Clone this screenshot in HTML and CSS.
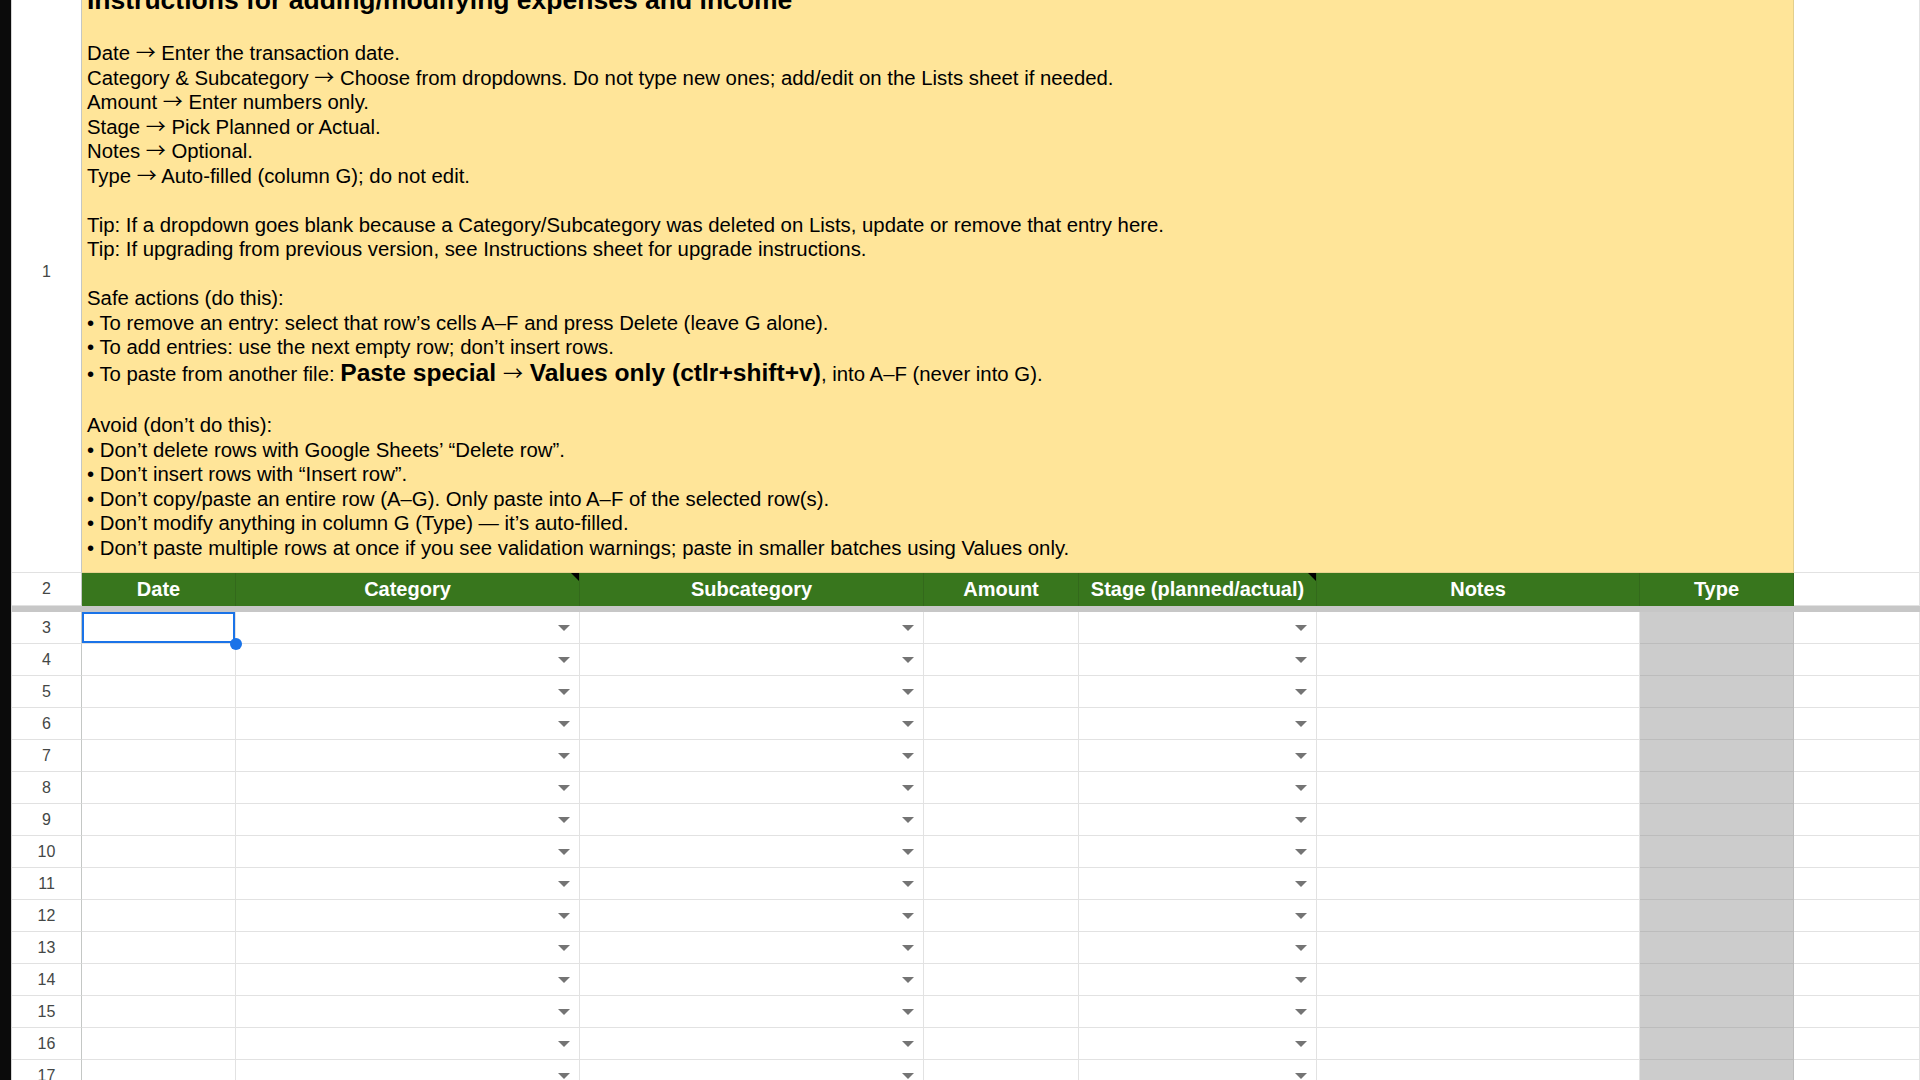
FILE: index.html
```html
<!DOCTYPE html>
<html lang="en">
<head>
  <meta charset="UTF-8">
  <title>Transactions</title>
  <link rel="stylesheet" href="styles.css">
</head>
<body>
  <div class="edge"></div>
  <div class="sheet">
    <div class="row row-notes">
      <div class="rh">1</div>
      <div class="cell instructions">
        <p class="title">Instructions for adding/modifying expenses and income</p>
        <p>Date <span class="to">→</span> Enter the transaction date.<br>
          Category &amp; Subcategory <span class="to">→</span> Choose from dropdowns. Do not type new ones; add/edit on the Lists sheet if needed.<br>
          Amount <span class="to">→</span> Enter numbers only.<br>
          Stage <span class="to">→</span> Pick Planned or Actual.<br>
          Notes <span class="to">→</span> Optional.<br>
          Type <span class="to">→</span> Auto-filled (column G); do not edit.</p>
        <p>Tip: If a dropdown goes blank because a Category/Subcategory was deleted on Lists, update or remove that entry here.<br>
          Tip: If upgrading from previous version, see Instructions sheet for upgrade instructions.</p>
        <p class="tight">Safe actions (do this):<br>
          • To remove an entry: select that row’s cells A–F and press Delete (leave G alone).<br>
          • To add entries: use the next empty row; don’t insert rows.</p>
        <p class="paste">• To paste from another file: <strong>Paste special <span class="to">→</span> Values only (ctlr+shift+v)</strong>, into A–F (never into G).</p>
        <p>Avoid (don’t do this):<br>
          • Don’t delete rows with Google Sheets’ “Delete row”.<br>
          • Don’t insert rows with “Insert row”.<br>
          • Don’t copy/paste an entire row (A–G). Only paste into A–F of the selected row(s).<br>
          • Don’t modify anything in column G (Type) — it’s auto-filled.<br>
          • Don’t paste multiple rows at once if you see validation warnings; paste in smaller batches using Values only.</p>
      </div>
      <div class="cell blank"></div>
    </div>

    <div class="row row-head">
      <div class="rh">2</div>
      <div class="hcell">Date</div>
      <div class="hcell note">Category</div>
      <div class="hcell">Subcategory</div>
      <div class="hcell">Amount</div>
      <div class="hcell note">Stage (planned/actual)</div>
      <div class="hcell">Notes</div>
      <div class="hcell">Type</div>
      <div class="cell blank"></div>
    </div>

    <div class="freeze"></div>

    <div id="rows"></div>
  </div>

  <script src="sheet.js"></script>
</body>
</html>
```

FILE: sheet.js
```js
// build the empty entry rows 3..17
var rows = document.getElementById('rows');

for (var n = 3; n <= 17; n++) {
  var row = document.createElement('div');
  row.className = 'row row-data';

  var cells = [
    '<div class="rh">' + n + '</div>',
    '<div class="cell' + (n === 3 ? ' selected' : '') + '"></div>',
    '<div class="cell dd"><span class="arrow"></span></div>',
    '<div class="cell dd"><span class="arrow"></span></div>',
    '<div class="cell"></div>',
    '<div class="cell dd"><span class="arrow"></span></div>',
    '<div class="cell"></div>',
    '<div class="cell type"></div>',
    '<div class="cell"></div>'
  ];

  row.innerHTML = cells.join('');
  rows.appendChild(row);
}
```

FILE: styles.css
```css
body {
  margin: 0;
  padding: 0;
  display: flex;
  height: 100vh;
  overflow: hidden;
  background: #fff;
  font-family: "Liberation Sans", Arial, sans-serif;
  color: #000;
}

.edge {
  width: 11px;
  flex-shrink: 0;
  background: #0b0b0b;
  border-right: 1px solid #d6d6d6;
}

.sheet {
  flex: 1;
  margin-top: -29px;
}

.row {
  display: grid;
  grid-template-columns: 70px 154px 344px 344px 155px 238px 323px 154px 1fr;
}

.rh {
  display: flex;
  align-items: center;
  justify-content: center;
  font-size: 16px;
  color: #444746;
  border-right: 1px solid #c4c7c5;
  border-bottom: 1px solid #e1e1e1;
  box-sizing: border-box;
}

.cell {
  position: relative;
  box-sizing: border-box;
  border-right: 1px solid #e2e2e2;
  border-bottom: 1px solid #e2e2e2;
}

/* row 1: the instructions block */
.row-notes {
  height: 602px;
}

.instructions {
  grid-column: span 7;
  background: #ffe599;
  border-right: 1px solid #e3cf8c;
  border-bottom: 1px solid #e8d38f;
  padding: 0 5px 12px;
  display: flex;
  flex-direction: column;
  justify-content: flex-end;
  overflow: hidden;
  font-size: 20.35px;
  line-height: 24.5px;
}

.instructions p {
  margin: 0 0 24.5px 0;
}

.instructions p.tight,
.instructions p:last-child {
  margin-bottom: 0;
}

.instructions .title {
  font-size: 26.5px;
  line-height: 32.5px;
  font-weight: 700;
}

.instructions .paste {
  line-height: 29px;
}

.paste strong {
  font-size: 24.6px;
  line-height: 26px;
}

.to {
  display: inline-block;
  font-family: "Noto Sans CJK JP", sans-serif;
  font-weight: 400;
  font-size: 20px;
  line-height: 20px;
}

/* row 2: column headers */
.row-head {
  height: 33px;
}

.hcell {
  position: relative;
  display: flex;
  align-items: center;
  justify-content: center;
  background: #38761d;
  color: #fff;
  font-size: 20px;
  font-weight: 700;
  border-right: 1px solid #33691b;
}

.hcell.note::after {
  content: '';
  position: absolute;
  top: 0;
  right: 0;
  border-top: 8px solid #000;
  border-left: 8px solid transparent;
}

.freeze {
  height: 6px;
  background: #c7c7c7;
}

/* data rows */
.row-data {
  height: 32px;
}

.dd {
  display: flex;
  align-items: center;
  justify-content: flex-end;
  padding-right: 9px;
}

.arrow {
  width: 0;
  height: 0;
  border-left: 6px solid transparent;
  border-right: 6px solid transparent;
  border-top: 6px solid #747474;
}

.type {
  background: #cccccc;
  border-bottom-color: #bcbcbc;
  border-right-color: #bcbcbc;
}

.selected {
  box-shadow: inset 0 0 0 2px #1a73e8;
  z-index: 1;
}

.selected::after {
  content: '';
  position: absolute;
  right: -7px;
  bottom: -7px;
  width: 12px;
  height: 12px;
  border-radius: 50%;
  background: #1a73e8;
}
```
